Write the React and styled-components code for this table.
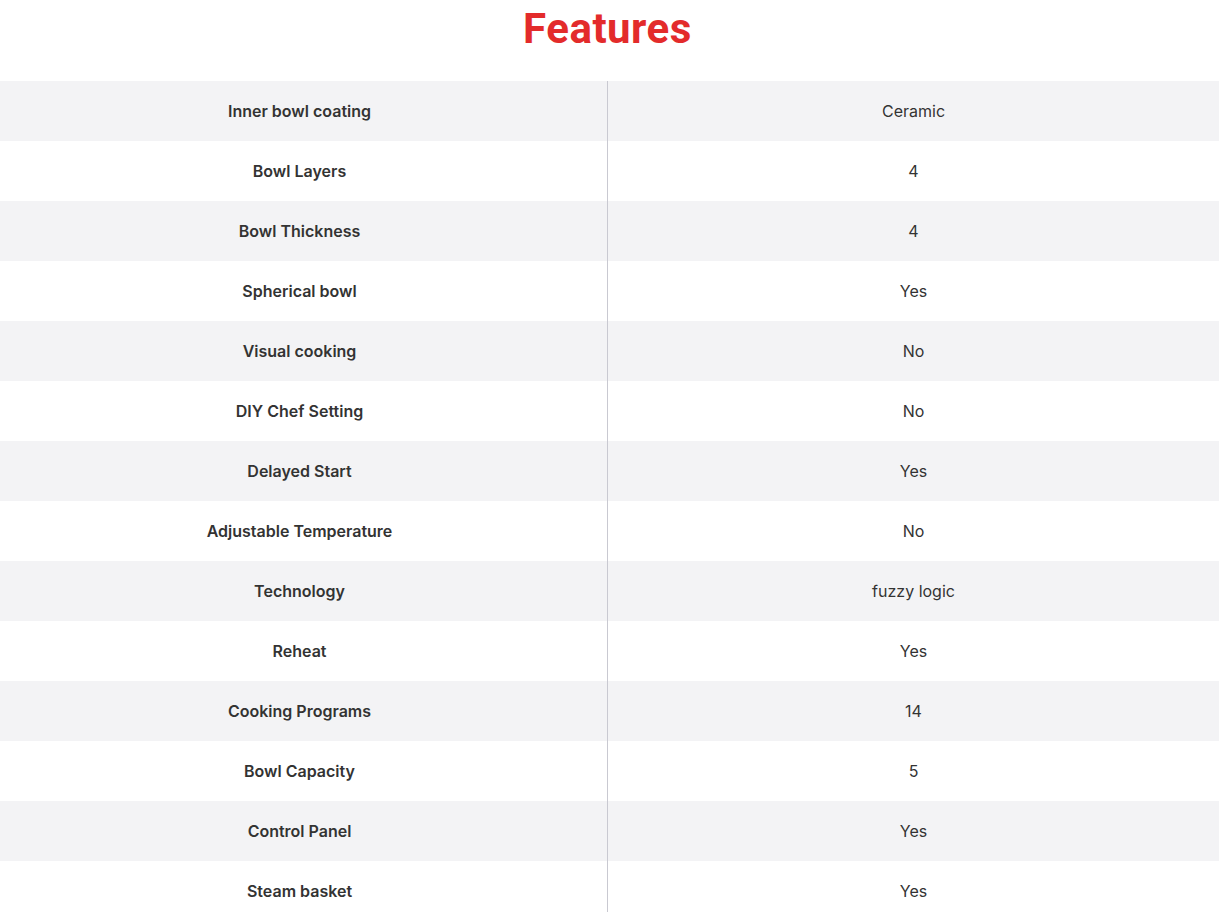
import React from 'react';
import styled, { createGlobalStyle } from 'styled-components';

const GlobalStyle = createGlobalStyle`
  body {
    margin: 0;
    background: #fff;
    font-family: Inter, 'Noto Sans', sans-serif;
  }
`;

const Page = styled.div`
  width: 1219px;
`;

const Title = styled.h2`
  margin: 0;
  height: 81px;
  display: flex;
  justify-content: center;
  align-items: flex-start;
  padding: 4px 4px 0 0;
  box-sizing: border-box;
  font-family: Roboto, 'Liberation Sans', sans-serif;
  font-weight: 700;
  font-size: 42px;
  letter-spacing: 0.5px;
  color: #e32b2b;
`;

const Table = styled.div`
  display: grid;
  grid-template-columns: 608px 1fr;
`;

const Row = styled.div`
  display: contents;
  & > div {
    background: ${(p) => (p.$shade ? '#f3f3f5' : '#fff')};
  }
`;

const Cell = styled.div`
  height: 60px;
  display: flex;
  align-items: center;
  justify-content: center;
  font-size: 16px;
  color: #333;
  font-weight: ${(p) => (p.$label ? 600 : 400)};
  padding-right: ${(p) => (p.$label ? '8px' : '0')};
  border-right: ${(p) => (p.$label ? '1px solid #c9c9d1' : 'none')};
`;

const rows = [
  ['Inner bowl coating', 'Ceramic'],
  ['Bowl Layers', '4'],
  ['Bowl Thickness', '4'],
  ['Spherical bowl', 'Yes'],
  ['Visual cooking', 'No'],
  ['DIY Chef Setting', 'No'],
  ['Delayed Start', 'Yes'],
  ['Adjustable Temperature', 'No'],
  ['Technology', 'fuzzy logic'],
  ['Reheat', 'Yes'],
  ['Cooking Programs', '14'],
  ['Bowl Capacity', '5'],
  ['Control Panel', 'Yes'],
  ['Steam basket', 'Yes'],
];

export default function App() {
  return (
    <Page>
      <GlobalStyle />
      <Title>Features</Title>
      <Table>
        {rows.map(([label, value], i) => (
          <Row key={label} $shade={i % 2 === 0}>
            <Cell $label>{label}</Cell>
            <Cell>{value}</Cell>
          </Row>
        ))}
      </Table>
    </Page>
  );
}
